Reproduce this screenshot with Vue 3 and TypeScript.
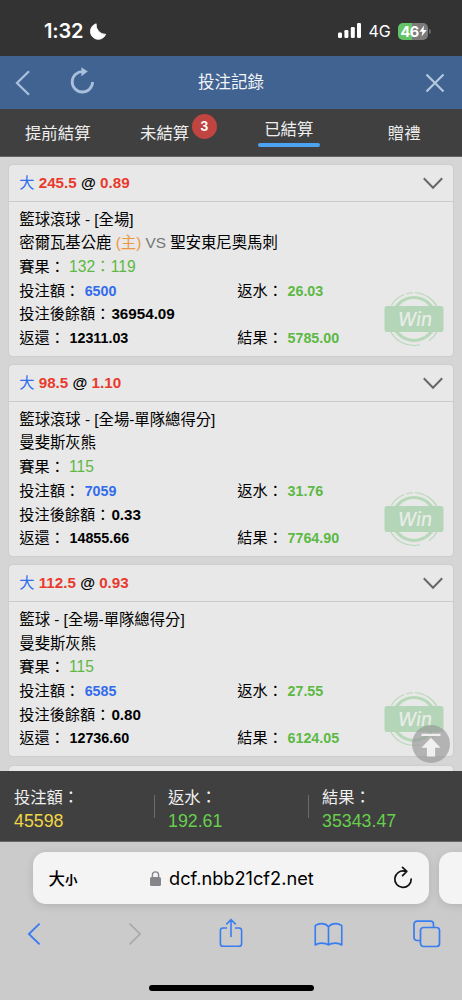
<script setup lang="ts">
interface Bet {
  line: string
  odds: string
  market: string
  team: string
  opponent?: string
  score: string
  stake: string
  balance: string
  returned: string
  rebate: string
  result: string
}

const bets: Bet[] = [
  { line: '245.5', odds: '0.89', market: '籃球滾球 - [全場]', team: '密爾瓦基公鹿', opponent: '聖安東尼奧馬刺', score: '132：119', stake: '6500', balance: '36954.09', returned: '12311.03', rebate: '26.03', result: '5785.00' },
  { line: '98.5', odds: '1.10', market: '籃球滾球 - [全場-單隊總得分]', team: '曼斐斯灰熊', score: '115', stake: '7059', balance: '0.33', returned: '14855.66', rebate: '31.76', result: '7764.90' },
  { line: '112.5', odds: '0.93', market: '籃球 - [全場-單隊總得分]', team: '曼斐斯灰熊', score: '115', stake: '6585', balance: '0.80', returned: '12736.60', rebate: '27.55', result: '6124.05' },
]

const totals = [
  { label: '投注額：', value: '45598', tone: 'yellow' },
  { label: '返水：', value: '192.61', tone: 'lime' },
  { label: '結果：', value: '35343.47', tone: 'lime' },
]
</script>

<template>
  <div class="phone">
    <header class="status">
      <span class="time">1:32</span>
      <svg class="moon" width="17" height="17" viewBox="0 0 17 17"><path d="M6.2.8A7.9 7.9 0 1 0 15.7 11.3 9.4 9.4 0 0 1 6.2.8Z" fill="#fff" stroke="#fff" stroke-width=".8" stroke-linejoin="round" /></svg>
      <span class="grow"></span>
      <svg width="24" height="16" viewBox="0 0 24 16" fill="#fff">
        <rect x="0" y="9.6" width="4" height="5.4" rx="1.2" /><rect x="6.4" y="7" width="4" height="8" rx="1.2" />
        <rect x="12.8" y="4" width="4" height="11" rx="1.2" /><rect x="19" y="0" width="4" height="15" rx="1.2" />
      </svg>
      <span class="net">4G</span>
      <span class="battery"><b>46</b><svg width="8" height="12" viewBox="0 0 8 12"><path d="M5.2.6.4 6.8h3L2.6 11.4 7.7 5H4.5Z" fill="#fff" /></svg></span>
      <i class="cap"></i>
    </header>

    <nav class="title">
      <svg class="back" width="16" height="26" viewBox="0 0 16 26"><path d="M14 1.2 2 13l12 11.8" fill="none" stroke="#a9bfdb" stroke-width="2.3" /></svg>
      <svg class="reload" width="26" height="28" viewBox="0 0 26 28"><path d="M13 4.6A10.2 10.2 0 1 0 22.6 15" fill="none" stroke="#a9bfdb" stroke-width="2.8" /><path d="M11.4.2 17.8 4.6l-6.4 4.6Z" fill="#a9bfdb" /></svg>
      <span class="heading">投注記錄</span>
      <svg class="close" width="20" height="20" viewBox="0 0 20 20"><path d="m1.5 1.5 17 17m0-17-17 17" fill="none" stroke="#b4c8df" stroke-width="2.2" /></svg>
    </nav>

    <div class="tabs">
      <div class="tab">提前結算</div>
      <div class="tab pending">未結算<span class="badge">3</span></div>
      <div class="tab active"><span>已結算</span></div>
      <div class="tab">贈禮</div>
    </div>

    <main class="list">
      <article v-for="bet in bets" :key="bet.line" class="card">
        <div class="card-head">
          <span><span class="blue">大</span> <b class="red">{{ bet.line }}</b> <b>@</b> <b class="red">{{ bet.odds }}</b></span>
          <svg width="20" height="13" viewBox="0 0 20 13"><path d="m.8 1.2 9.2 9.6 9.2-9.6" fill="none" stroke="#686868" stroke-width="2" /></svg>
        </div>
        <div class="card-body">
          <div class="row event">{{ bet.market }}</div>
          <div class="row event">{{ bet.team }}<template v-if="bet.opponent"><span class="orange home-side">(主)</span> <span class="gray">VS</span> {{ bet.opponent }}</template></div>
          <div class="row">賽果： <span class="green score">{{ bet.score }}</span></div>
          <div class="row split"><span>投注額： <b class="blue">{{ bet.stake }}</b></span><span>返水： <b class="green">{{ bet.rebate }}</b></span></div>
          <div class="row tight">投注後餘額：<b>{{ bet.balance }}</b></div>
          <div class="row split"><span>返還： <b>{{ bet.returned }}</b></span><span>結果： <b class="green">{{ bet.result }}</b></span></div>
        </div>
        <svg class="stamp" width="60" height="56" viewBox="0 0 60 56">
          <g fill="none" stroke="#b7d8b9">
            <circle cx="30" cy="28" r="21.5" stroke-width="3.2" />
            <path d="M7.5 14A26.3 26.3 0 0 1 20 3.6M22.5 2.8A26.3 26.3 0 0 1 29 1.7M31 1.7A26.3 26.3 0 0 1 53 15.5M5.5 38A26.3 26.3 0 0 0 36 53.8M45 49.8A26.3 26.3 0 0 0 53.5 40" stroke-width="1.1" />
          </g>
          <rect x=".5" y="15" width="59" height="26" rx="2.5" fill="#b4d5b7" />
          <text x="31" y="34.5" text-anchor="middle" class="win">Win</text>
        </svg>
      </article>
      <article class="card next"></article>
      <div class="to-top">
        <svg width="38" height="38" viewBox="0 0 38 38"><path d="M9.5 8.7h19v2.4h-19ZM19 12.7l9.6 10.1h-5.5v8.6h-8.2v-8.6H9.4Z" fill="#f0f0f0" /></svg>
      </div>
    </main>

    <section class="totals">
      <div v-for="t in totals" :key="t.label" class="total">
        <div class="label">{{ t.label }}</div>
        <div class="value" :class="t.tone">{{ t.value }}</div>
      </div>
    </section>

    <footer class="browser">
      <div class="pills">
        <div class="url">
          <span class="size">大<small>小</small></span>
          <span class="host">
            <svg width="11" height="15" viewBox="0 0 11 15"><rect y="6" width="11" height="9" rx="1.6" fill="#858589" /><path d="M2.4 7V4.2a3.1 3.3 0 0 1 6.2 0V7" fill="none" stroke="#858589" stroke-width="1.4" /></svg>
            <span class="domain">dcf.nbb21cf2.net</span>
          </span>
          <svg class="refresh" width="20" height="24" viewBox="0 0 20 24" fill="none" stroke="#111" stroke-width="1.7" stroke-linecap="round" stroke-linejoin="round"><path d="M11.5 5.1A8.2 8.2 0 1 0 18.2 13M9.5 1.4l4.3 4-4.2 4.2M11.5 5.1l2.3.3" /></svg>
        </div>
        <div class="pill-next"></div>
      </div>
      <div class="tools">
        <svg width="14" height="24" viewBox="0 0 14 24"><path d="M12.6 1.6 1.9 12l10.7 10.4" fill="none" stroke="#3a7df0" stroke-width="1.9" /></svg>
        <svg width="14" height="24" viewBox="0 0 14 24"><path d="m1.6 1.6 10.5 10.4L1.6 22.4" fill="none" stroke="#a9a9ab" stroke-width="1.7" /></svg>
        <svg class="share" width="24" height="31" viewBox="0 0 24 31"><path d="M8 10H4A2.6 2.6 0 0 0 1.4 12.6v13.1A2.6 2.6 0 0 0 4 28.3h16a2.6 2.6 0 0 0 2.6-2.6V12.6A2.6 2.6 0 0 0 20 10h-4M12 19V2M7.3 6.4 12 1.7l4.7 4.7" fill="none" stroke="#3a7df0" stroke-width="1.6" /></svg>
        <svg width="29" height="25" viewBox="0 0 30 26"><path d="M15 5C13 2.5 10.5 1.7 7.8 1.7c-2.5 0-4.8.7-6.6 2.1v20.1c1.8-1.4 4.1-2 6.6-2 2.8 0 5.3.5 7.2 2 1.9-1.5 4.4-2 7.2-2 2.5 0 4.8.6 6.6 2V3.8c-1.8-1.4-4.1-2.1-6.6-2.1C19.5 1.7 17 2.5 15 5Zm0 0v18.9" fill="none" stroke="#3a7df0" stroke-width="1.7" stroke-linejoin="round" /></svg>
        <svg width="28" height="28" viewBox="0 0 28 28" fill="none" stroke="#3a7df0" stroke-width="1.7"><rect x="7.5" y="7.5" width="19" height="19" rx="3" /><path d="M7.5 20.5H4a3 3 0 0 1-3-3V4.2a3 3 0 0 1 3-3h13.5a3 3 0 0 1 3 3v3.3" /></svg>
      </div>
      <div class="home"></div>
    </footer>
  </div>
</template>

<style>
body { margin: 0; background: #cbcbcb; }
</style>

<style scoped>
* { box-sizing: border-box; }
svg { display: block; flex: none; }
.phone { width: 462px; height: 1000px; overflow: hidden; display: flex; flex-direction: column; font-family: "Liberation Sans", "Noto Sans CJK TC", sans-serif; color: #000; }
.phone > * { flex: none; }
.grow { flex: 1; }
.status { height: 56px; background: #333; color: #fff; display: flex; align-items: center; padding: 6px 31px 0 44px; }
.time { font: 600 20px/24px Inter, sans-serif; letter-spacing: -0.2px; width: 45px; white-space: nowrap; }
.moon { margin-left: 1px; }
.net { font: 400 16px/24px Inter, sans-serif; margin-left: 6.5px; width: 29.5px; }
.battery { width: 30px; height: 17px; border-radius: 5px; background: linear-gradient(90deg, #62c466 46%, #7b7b7b 46%); display: flex; align-items: center; padding-left: 2.5px; }
.battery b { font: 700 14.5px/17px Inter, sans-serif; letter-spacing: -0.5px; }
.cap { width: 2px; height: 5px; margin-left: 1px; background: #666; border-radius: 0 2px 2px 0; }

.title { height: 53px; background: #416392; display: grid; grid-template-columns: 15px 40px 26px 1fr 20px; align-items: center; padding: 0 17px 0 15px; }
.reload { grid-column: 3; margin-top: -4px; }
.heading { color: #f2f4f7; font-size: 16.5px; padding-left: 102px; line-height: 24px; margin-top: -2px; }

.tabs { height: 48px; background: #404040; border-bottom: 1px solid #646464; display: grid; grid-template-columns: repeat(4, 1fr); color: #efefef; font-size: 16.4px; line-height: 24px; }
.tab { display: flex; justify-content: center; align-items: center; }
.pending { justify-content: flex-start; padding-left: 24.5px; }
.badge { width: 25px; height: 25px; margin: -13px 0 0 2.5px; border-radius: 50%; background: #c0443f; color: #fff; font: 700 12.5px/25px Inter, sans-serif; text-align: center; }
.active span { display: flex; flex-direction: column; align-items: center; gap: 2.5px; margin-top: -2px; }
.active span::after { content: ""; width: 62px; height: 3.5px; border-radius: 2px; background: #4ba3f1; }

.list { height: 614px; position: relative; overflow: hidden; background: #d5d5d5; padding: 8px 9.3px 0; font-size: 15.2px; }
.card { position: relative; height: 191px; margin-bottom: 9.2px; background: #e8e8e8; border-radius: 4px; box-shadow: 0 0 2px #bcbcbc; }
.card-head { height: 37px; border-bottom: 1px solid #cbcbcb; display: flex; align-items: center; justify-content: space-between; padding: 0 10px 0 10px; line-height: 24px; }
.card-body { padding: 5.6px 10px 0; }
.row { height: 23.7px; line-height: 23.7px; white-space: nowrap; }
.event { font-size: 15.35px; }
.home-side { margin-left: 4.4px; }
.score { font-size: 15.6px; }
.split { display: grid; grid-template-columns: 218px 1fr; }
.split b { font-size: 14.3px; margin-left: 0.4px; }
.tight b { margin-left: 1px; }
.blue { color: #326cec; }
.red { color: #e93a2d; }
.green { color: #5cb944; }
.orange { color: #ec973f; }
.gray { color: #777; }
.stamp { position: absolute; right: 9.2px; bottom: 9px; }
.win { font: italic 500 18.5px Inter, sans-serif; fill: #e8ece8; }
.to-top { position: absolute; right: 12px; bottom: 8.5px; width: 38px; height: 38px; border-radius: 50%; background: rgba(150, 150, 150, .65); }

.totals { height: 71px; background: #404040; display: grid; grid-template-columns: repeat(3, 154px); padding-top: 14px; border-bottom: 1px solid #666; }
.total { padding-left: 14px; position: relative; color: #efefef; }
.total + .total::before { content: ""; position: absolute; left: 0; top: 10px; height: 23px; width: 1px; background: #6b6b6b; }
.label { font-size: 16.3px; line-height: 24px; }
.value { font-size: 17.8px; line-height: 24px; }
.yellow { color: #f0d648; }
.lime { color: #67cf4b; }

.browser { height: 158px; background: #cbcbcb; }
.pills { display: flex; gap: 10px; padding: 10px 0 0 33px; }
.url, .pill-next { height: 52px; flex: none; background: #f4f4f4; border-radius: 13px; box-shadow: 0 2px 9px rgba(0, 0, 0, .12); }
.url { width: 395.5px; display: flex; align-items: center; padding: 0 16px 0 15.5px; }
.pill-next { width: 60px; }
.size { font-size: 16.5px; font-weight: 500; width: 101.5px; font-family: "Noto Sans CJK TC", sans-serif; }
.size small { font-size: 12.5px; font-weight: 700; }
.host { flex: 1; display: flex; align-items: center; }
.domain { font: 400 18.2px/24px Inter, sans-serif; margin-left: 8px; }
.refresh { margin-top: -1px; }
.tools { display: grid; grid-template-columns: 68px 134px 58px 137px 59px; justify-items: center; align-items: center; height: 32px; margin-top: 14px; }
.share { margin-top: -2px; }
.home { width: 165px; height: 6px; border-radius: 3px; background: #000; margin: 34.5px 0 0 149px; }
</style>
